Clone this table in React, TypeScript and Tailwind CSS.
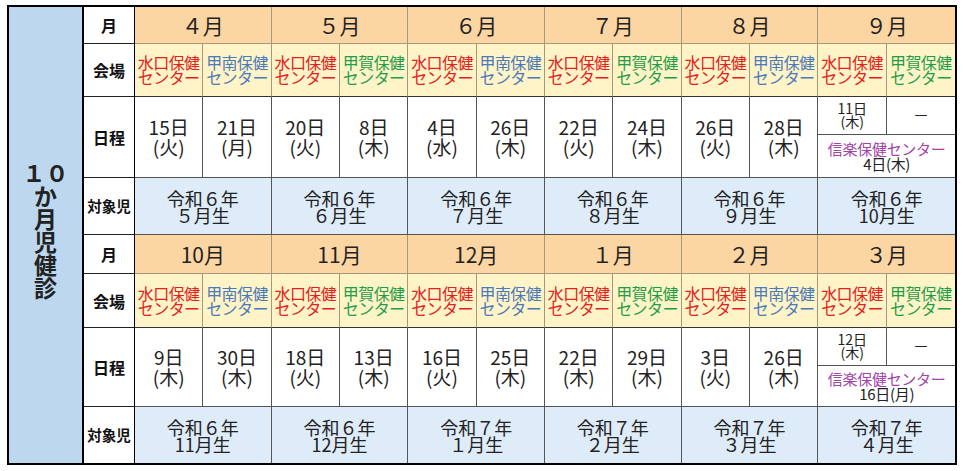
import React from "react";

type V = "m" | "n" | "k";
const venueName: Record<V, string> = { m: "水口保健", n: "甲南保健", k: "甲賀保健" };
const venueColor: Record<V, string> = { m: "text-[#e3211d]", n: "text-[#4b79b9]", k: "text-[#1f9e4a]" };

type Month = {
  label: string;
  venues: [V, V];
  dates: [string, string][] | null;
  special?: { top: [string, string]; date: string };
  target: [string, string];
};

const half1: Month[] = [
  { label: "４月", venues: ["m", "n"], dates: [["15日", "(火)"], ["21日", "(月)"]], target: ["令和６年", "５月生"] },
  { label: "５月", venues: ["m", "k"], dates: [["20日", "(火)"], ["8日", "(木)"]], target: ["令和６年", "６月生"] },
  { label: "６月", venues: ["m", "n"], dates: [["4日", "(水)"], ["26日", "(木)"]], target: ["令和６年", "７月生"] },
  { label: "７月", venues: ["m", "k"], dates: [["22日", "(火)"], ["24日", "(木)"]], target: ["令和６年", "８月生"] },
  { label: "８月", venues: ["m", "n"], dates: [["26日", "(火)"], ["28日", "(木)"]], target: ["令和６年", "９月生"] },
  { label: "９月", venues: ["m", "k"], dates: null, special: { top: ["11日", "(木)"], date: "4日(木)" }, target: ["令和６年", "10月生"] },
];

const half2: Month[] = [
  { label: "10月", venues: ["m", "n"], dates: [["9日", "(木)"], ["30日", "(木)"]], target: ["令和６年", "11月生"] },
  { label: "11月", venues: ["m", "k"], dates: [["18日", "(火)"], ["13日", "(木)"]], target: ["令和６年", "12月生"] },
  { label: "12月", venues: ["m", "n"], dates: [["16日", "(火)"], ["25日", "(木)"]], target: ["令和７年", "１月生"] },
  { label: "１月", venues: ["m", "k"], dates: [["22日", "(木)"], ["29日", "(木)"]], target: ["令和７年", "２月生"] },
  { label: "２月", venues: ["m", "n"], dates: [["3日", "(火)"], ["26日", "(木)"]], target: ["令和７年", "３月生"] },
  { label: "３月", venues: ["m", "k"], dates: null, special: { top: ["12日", "(木)"], date: "16日(月)" }, target: ["令和７年", "４月生"] },
];

function Label({ text, small, last }: { text: string; small?: boolean; last?: boolean }) {
  return (
    <div
      className={`flex items-center justify-center bg-white border-r border-black ${last ? "" : "border-b border-b-[#222]"} font-bold text-[#111] ${small ? "text-[14.5px]" : "text-[16px]"}`}
    >
      {text}
    </div>
  );
}

function Half({ months, last }: { months: Month[]; last?: boolean }) {
  return (
    <>
      <Label text="月" />
      {months.map((m, i) => (
        <div
          key={"h" + i}
          className={`col-span-2 flex items-center justify-center bg-[#fcd6a2] border-b border-[#a8977a] ${i < 5 ? "border-r" : ""} text-[21px] leading-none text-[#222] pt-[1px]`}
        >
          {m.label}
        </div>
      ))}

      <Label text="会場" />
      {months.map((m, i) =>
        m.venues.map((v, j) => (
          <div
            key={"v" + i + j}
            className={`flex items-center justify-center bg-[#fff4c7] border-b border-b-[#333] ${i < 5 || j === 0 ? "border-r border-r-[#a8977a]" : ""}`}
          >
            <div className={`whitespace-pre-line text-center text-[16px] leading-[15px] tracking-[-0.6px] ${venueColor[v]}`}>
              {venueName[v] + "\nセンター"}
            </div>
          </div>
        ))
      )}

      <Label text="日程" />
      {months.map((m, i) =>
        m.dates ? (
          m.dates.map((d, j) => (
            <div
              key={"d" + i + j}
              className="flex items-center justify-center bg-white border-b border-r border-[#555]"
            >
              <div className="whitespace-pre-line text-center text-[19px] leading-[20px] text-[#222]">
                {d[0] + "\n" + d[1]}
              </div>
            </div>
          ))
        ) : (
          <div key={"d" + i} className="col-span-2 flex flex-col bg-white border-b border-[#555]">
            <div className="flex h-[38px] border-b border-[#555]">
              <div className="flex-1 flex items-center justify-center border-r border-[#555]">
                <div className="whitespace-pre-line text-center text-[14px] leading-[13px] text-[#222] -mt-[2px]">
                  {m.special!.top[0] + "\n" + m.special!.top[1]}
                </div>
              </div>
              <div className="flex-1 flex items-center justify-center text-[16px] text-[#222] -mt-[3px]">－</div>
            </div>
            <div className="flex-1 flex items-center justify-center">
              <div className="whitespace-pre-line text-center text-[15px] leading-[15px] tracking-[-0.3px] text-[#222] first-line:text-[#a344aa]">
                {"信楽保健センター\n" + m.special!.date}
              </div>
            </div>
          </div>
        )
      )}

      <Label text="対象児" small last={last} />
      {months.map((m, i) => (
        <div
          key={"t" + i}
          className={`col-span-2 flex items-center justify-center bg-[#deebf8] ${last ? "" : "border-b border-b-[#555]"} ${i < 5 ? "border-r border-r-[#555]" : ""}`}
        >
          <div className="whitespace-pre-line text-center text-[18px] leading-[17px] text-[#222] pt-[1px]">
            {m.target[0] + "\n" + m.target[1]}
          </div>
        </div>
      ))}
    </>
  );
}

export default function App() {
  return (
    <div
      className="w-[963px] h-[471px] bg-white pt-[5px] pl-[7px]"
      style={{ fontFamily: '"Noto Sans CJK JP", "Noto Sans", sans-serif' }}
    >
      <div className="w-[950px] h-[460px] border-2 border-black flex">
        <div className="w-[75px] shrink-0 bg-[#bdd7ee] border-r-2 border-black flex items-center justify-center">
          <div className="whitespace-pre-line text-center text-[23px] leading-[23px] font-bold text-[#222] -mt-[10px]">
            {"１０\nか\n月\n児\n健\n診"}
          </div>
        </div>
        <div className="flex-1 grid grid-cols-[51px_repeat(12,minmax(0,1fr))] grid-rows-[37px_53px_81px_57px_39px_54px_79px_56px]">
          <Half months={half1} />
          <Half months={half2} last />
        </div>
      </div>
    </div>
  );
}
